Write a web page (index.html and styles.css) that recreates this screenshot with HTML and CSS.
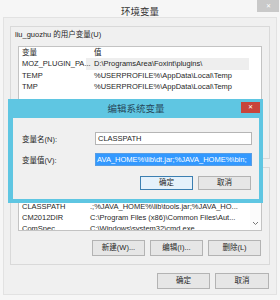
FILE: index.html
```html
<!DOCTYPE html>
<html lang="zh-CN">
<head>
  <meta charset="UTF-8" />
  <title>环境变量</title>
  <link rel="stylesheet" href="styles.css">
</head>
<body>

<div class="win">
  <div class="titlebar">
    <span class="title">环境变量</span>
    <span class="close">✕</span>
  </div>

  <div class="content">
    <div class="group">
      <div class="group-label">liu_guozhu 的用户变量(U)</div>
      <div class="list list-user">
        <div class="row head"><span class="c1">变量</span><span class="c2">值</span></div>
        <div class="row hot"><span class="c1">MOZ_PLUGIN_PA...</span><span class="c2">D:\ProgramsArea\Foxint\plugins\</span></div>
        <div class="row"><span class="c1">TEMP</span><span class="c2">%USERPROFILE%\AppData\Local\Temp</span></div>
        <div class="row"><span class="c1">TMP</span><span class="c2">%USERPROFILE%\AppData\Local\Temp</span></div>
      </div>
    </div>

    <div class="group group-sys">
      <div class="list list-sys">
        <div class="row head"><span class="c1">变量</span><span class="c2">值</span></div>
        <div class="row"><span class="c1">ANT_HOME</span><span class="c2">D:\ProgramsArea\apache-ant</span></div>
        <div class="row"><span class="c1">CLASSPATH</span><span class="c2">.;%JAVA_HOME%\lib\tools.jar;%JAVA_HO...</span></div>
        <div class="row"><span class="c1">CM2012DIR</span><span class="c2">C:\Program Files (x86)\Common Files\Aut...</span></div>
        <div class="row"><span class="c1">ComSpec</span><span class="c2">C:\Windows\system32\cmd.exe</span></div>
        <div class="scrollbar">
          <svg width="7" height="5" viewBox="0 0 7 5"><path d="M1 1 L3.5 3.5 L6 1" fill="none" stroke="#777" stroke-width="1"/></svg>
        </div>
      </div>
      <div class="btns">
        <span class="btn">新建(W)...</span>
        <span class="btn">编辑(I)...</span>
        <span class="btn">删除(L)</span>
      </div>
    </div>

    <div class="footer">
      <span class="btn">确定</span>
      <span class="btn wide">取消</span>
    </div>
  </div>

  <div class="dialog">
    <div class="dialog-title">
      编辑系统变量
      <span class="dialog-close">✕</span>
    </div>
    <div class="dialog-body">
      <div class="field">
        <label>变量名(N):</label>
        <div class="input">CLASSPATH</div>
      </div>
      <div class="field">
        <label>变量值(V):</label>
        <div class="input focus"><span class="sel">AVA_HOME%\lib\dt.jar;%JAVA_HOME%\bin;</span></div>
      </div>
      <div class="dlg-btns">
        <span class="btn default">确定</span>
        <span class="btn">取消</span>
      </div>
    </div>
  </div>
</div>

</body>
</html>
```

FILE: styles.css
```css
* { box-sizing: border-box; }
body { margin: 0; font-family: "Liberation Sans", "Noto Sans CJK SC", sans-serif; font-size: 7.5px; color: #1f1f1f; }

.win { position: relative; width: 280px; height: 300px; background: #f6f6f6; overflow: hidden; }
.titlebar { height: 17px; position: relative; text-align: center; }
.titlebar .title { display: inline-block; padding-top: 6px; font-size: 9.5px; line-height: 12px; color: #333; }
.close { position: absolute; top: 0; right: 1px; width: 22px; height: 12px; background: #c9c9c9; color: #fff; font-size: 6px; line-height: 12px; text-align: center; }

.content { margin: 0 3px; height: 278px; background: #f0f0f0; border: 1px solid #e2e2e2; padding: 8px 6px 0 6px; }

.group { border: 1px solid #d9d9d9; padding: 2px 7px 8px; }
.group-sys { margin-top: 8px; padding-top: 9px; }
.group-label { margin-left: -3px; line-height: 12px; margin-bottom: 5px; }

.list { position: relative; background: #fff; border: 1px solid #c3c3c3; overflow: hidden; }
.list-user { height: 104px; }
.list-sys { height: 54px; }
.row { display: flex; height: 11.5px; line-height: 11.5px; padding-left: 3px; white-space: nowrap; }
.row.head { height: 11px; line-height: 11px; }
.list-sys .row { height: 11px; line-height: 11px; }
.list-sys .row.head { height: 11.5px; }
.list-user .c1 { width: 72px; }
.list-sys .c1 { width: 68px; }
.row.hot { background: linear-gradient(to right, #fff 67px, #eeeeee 67px, #eeeeee 230px, #fff 230px); }
.scrollbar { position: absolute; right: 0; top: 0; bottom: 0; width: 11px; background: #fbfbfb; display: flex; align-items: flex-end; justify-content: center; padding-bottom: 4px; }
.scrollbar svg { display: block; }

.btns { display: flex; justify-content: flex-end; gap: 5px; margin-top: 9px; padding-right: 1px; }
.btn { width: 53px; height: 16px; border: 1px solid #b3b3b3; background: #e6e6e6; line-height: 14px; text-align: center; white-space: nowrap; }
.btn.wide { width: 54px; }
.footer { display: flex; justify-content: flex-end; gap: 5px; margin-top: 8px; padding-right: 1px; }

.dialog { position: absolute; z-index: 10; left: 8px; top: 99px; width: 255px; height: 104px; background: #5fc6e2; padding: 0 4px 4px 5px; display: flex; flex-direction: column; }
.dialog-title { position: relative; height: 19px; line-height: 19px; text-align: center; font-size: 9.5px; color: #27485a; }
.dialog-close { position: absolute; top: 3px; right: -1px; width: 19px; height: 11px; background: #c8443b; color: #fff; font-size: 6px; line-height: 11px; }
.dialog-body { flex: 1; background: #f0f0f0; padding: 14px 7px 0 9px; display: flex; flex-direction: column; gap: 8px; }
.field { display: grid; grid-template-columns: 73px 1fr; align-items: center; height: 13px; }
.input { height: 13px; border: 1px solid #b5b5b5; background: #fff; padding-left: 2px; line-height: 11px; overflow: hidden; white-space: nowrap; }
.input.focus { border-color: #569de5; padding-left: 0; }
.input .sel { display: block; height: 11px; background: #3399ff; color: #fff; padding-left: 1px; }
.dlg-btns { display: flex; justify-content: flex-end; gap: 5px; margin-top: 2px; padding-right: 1px; }
.dlg-btns .btn { height: 14px; line-height: 12px; }
.btn.default { border-color: #3c7fb1; background: #e5f1fb; }
```
